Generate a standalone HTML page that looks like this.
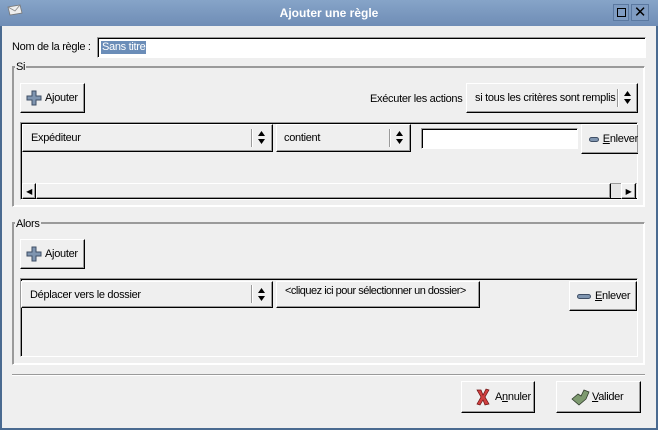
<!DOCTYPE html>
<html><head><meta charset="utf-8">
<style>
*{box-sizing:border-box;margin:0;padding:0}
body{width:658px;height:430px;overflow:hidden;background:#4a6a90;font-family:"Liberation Sans","DejaVu Sans",sans-serif;font-size:11px;letter-spacing:-0.3px;white-space:nowrap;color:#000;position:relative}
.win{position:absolute;left:2px;top:26px;width:654px;height:402px;background:#efefef}
.tb{position:absolute;left:0;top:0;width:658px;height:26px;background:linear-gradient(#86a4c8,#6f8db6)}
.a{position:absolute}
.btn{position:absolute;background:#efefef;border:1px solid;border-color:#fff #000 #000 #fff;box-shadow:inset -1px -1px 0 #9a9a9a;display:flex;align-items:center}
.sunk{position:absolute;border:1px solid;border-color:#9a9a9a #fff #fff #9a9a9a;box-shadow:inset 1px 1px 0 #000}
.entry{position:absolute;background:#fff;border:1px solid;border-color:#9a9a9a #fff #fff #9a9a9a;box-shadow:inset 1px 1px 0 #000}
.frame{position:absolute;border:1px solid;border-color:#9a9a9a #fff #fff #9a9a9a;box-shadow:1px 1px 0 #9a9a9a inset, -1px -1px 0 #fff inset}
.flab{position:absolute;background:#efefef;padding:0 1px;line-height:12px}
.sep{position:absolute;width:2px;height:18px;background:#9a9a9a;border-right:1px solid #fff}
u{text-decoration:underline}
</style></head><body>
<div class="tb"></div>
<svg class="a" style="left:7px;top:4px" width="16" height="12" viewBox="0 0 16 12"><path d="M1 3 L13 1 L15 9 L3 11 Z" fill="#eee" stroke="#777" stroke-width=".8"/><path d="M1 3 L8 7 L13 1" fill="none" stroke="#888" stroke-width=".8"/></svg>
<div class="a" style="left:0;top:6px;width:658px;text-align:center;color:#fff;font-weight:bold;font-size:12px;letter-spacing:0">Ajouter une règle</div>
<div class="a" style="left:613px;top:4px;width:16px;height:17px;border:1px solid #5a78a0;background:#7f9cc2"></div>
<div class="a" style="left:617px;top:8px;width:9px;height:9px;border:1.5px solid #000"></div>
<div class="a" style="left:631px;top:4px;width:18px;height:17px;border:1px solid #5a78a0;background:#7f9cc2;text-align:center;font-size:15px;line-height:15px">✕</div>
<div class="win"></div>

<div class="a" style="left:12px;top:41px">Nom de la règle :</div>
<div class="entry" style="left:97px;top:37px;width:549px;height:21px"></div>
<div class="a" style="left:101px;top:41px;background:#6b8db8;color:#fff;padding:0 1px;line-height:13px">Sans titre</div>

<svg width="0" height="0" style="position:absolute"><defs><g id="ud"><path d="M0 5 L3.5 0 L7 5Z M0 8 L7 8 L3.5 13Z" fill="#000"/></g></defs></svg>

<!-- Si frame -->
<div class="frame" style="left:12px;top:66px;width:633px;height:141px"></div>
<div class="flab" style="left:15px;top:61px">Si</div>
<div class="btn" style="left:20px;top:83px;width:65px;height:30px;padding-left:5px">
<svg width="16" height="16" viewBox="0 0 16 16"><path d="M6 1h4v5h5v4h-5v5H6v-5H1V6h5z" fill="#7f95b0" stroke="#3f4f66"/></svg><span style="margin-left:3px">A<u>j</u>outer</span></div>
<div class="a" style="left:370px;top:93px">Exécuter les actions</div>
<div class="btn" style="left:466px;top:83px;width:172px;height:30px;padding-left:8px">si tous les critères sont remplis</div>
<div class="sep" style="left:617px;top:89px"></div>
<svg class="a" style="left:624px;top:91px" width="7" height="13"><use href="#ud"/></svg>

<div class="sunk" style="left:20px;top:122px;width:618px;height:78px"></div>
<div class="btn" style="left:22px;top:124px;width:251px;height:28px;padding-left:8px">Expéditeur</div>
<div class="sep" style="left:251px;top:129px"></div>
<svg class="a" style="left:258px;top:131px" width="7" height="13"><use href="#ud"/></svg>
<div class="btn" style="left:276px;top:124px;width:135px;height:28px;padding-left:7px">contient</div>
<div class="sep" style="left:389px;top:129px"></div>
<svg class="a" style="left:396px;top:131px" width="7" height="13"><use href="#ud"/></svg>
<div class="entry" style="left:421px;top:128px;width:157px;height:21px"></div>
<div class="btn" style="left:581px;top:124px;width:57px;height:30px;padding-left:7px;border-right:none;overflow:hidden"><span style="display:inline-block;width:14px;height:5px;border-radius:3px;background:#7f95b0;border:1px solid #3f4f66"></span><span style="margin-left:4px"><u>E</u>nlever</span></div>
<div class="a" style="left:22px;top:183px;width:615px;height:16px;background:#e6e6e6;border-bottom:1px solid #000;border-top:1px solid #9a9a9a"></div>
<div class="btn" style="left:22px;top:183px;width:14px;height:16px;font-size:8px;justify-content:center">◀</div>
<div class="btn" style="left:36px;top:183px;width:575px;height:16px"></div>
<div class="btn" style="left:621px;top:183px;width:15px;height:16px;font-size:8px;justify-content:center">▶</div>

<!-- Alors frame -->
<div class="frame" style="left:12px;top:222px;width:633px;height:143px"></div>
<div class="flab" style="left:15px;top:218px">Alors</div>
<div class="btn" style="left:20px;top:239px;width:65px;height:30px;padding-left:5px">
<svg width="16" height="16" viewBox="0 0 16 16"><path d="M6 1h4v5h5v4h-5v5H6v-5H1V6h5z" fill="#7f95b0" stroke="#3f4f66"/></svg><span style="margin-left:3px">A<u>j</u>outer</span></div>
<div class="sunk" style="left:20px;top:278px;width:618px;height:79px"></div>
<div class="btn" style="left:21px;top:281px;width:252px;height:27px;padding-left:8px">Déplacer vers le dossier</div>
<div class="sep" style="left:251px;top:285px"></div>
<svg class="a" style="left:258px;top:288px" width="7" height="13"><use href="#ud"/></svg>
<div class="btn" style="left:276px;top:281px;width:204px;height:27px;padding-left:8px;align-items:flex-start;padding-top:3px;letter-spacing:-0.5px">&lt;cliquez ici pour sélectionner un dossier&gt;</div>
<div class="btn" style="left:569px;top:281px;width:68px;height:30px;padding-left:7px"><span style="display:inline-block;width:14px;height:5px;border-radius:3px;background:#7f95b0;border:1px solid #3f4f66"></span><span style="margin-left:4px"><u>E</u>nlever</span></div>

<div class="a" style="left:12px;top:374px;width:633px;height:2px;border-top:1px solid #9a9a9a;border-bottom:1px solid #fff"></div>

<div class="btn" style="left:461px;top:381px;width:74px;height:32px;padding-left:13px">
<svg width="16" height="18" viewBox="0 0 16 18"><path d="M2 2 L6 2 L8 7 L11 1 L14 2 L10 9 L14 16 L10 17 L8 12 L5 17 L2 16 L6 9 Z" fill="#d04040" stroke="#6a1010" stroke-width=".7"/></svg><span style="margin-left:4px">A<u>n</u>nuler</span></div>
<div class="btn" style="left:556px;top:381px;width:85px;height:32px;padding-left:14px">
<svg width="20" height="18" viewBox="0 0 20 18"><path d="M1 11 L7 6 L10 8 L13 2 L18 4 L15 11 L8 17 Z" fill="#7e9a70" stroke="#2e3a2a" stroke-width=".8"/></svg><span style="margin-left:1px"><u>V</u>alider</span></div>
</body></html>
